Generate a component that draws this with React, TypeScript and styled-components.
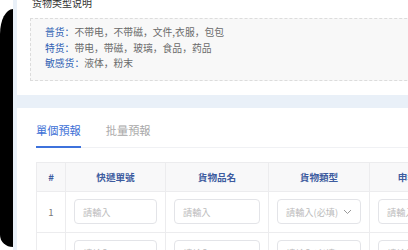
import React from 'react'
import styled, { createGlobalStyle } from 'styled-components'

const GlobalStyle = createGlobalStyle`
  html, body {
    margin: 0;
    padding: 0;
    background: #fff;
    overflow: hidden;
  }
  body {
    font-family: "Noto Sans CJK TC", "Noto Sans", sans-serif;
  }
`

const Screen = styled.div`
  display: flex;
  width: 408px;
  height: 250px;
  overflow: hidden;
`

const Bezel = styled.div`
  flex: 0 0 13px;
  margin: 9px 0 3px;
  background: #000;
  border-top-left-radius: 13px 25px;
  border-bottom-left-radius: 13px 12px;
`

const Main = styled.div`
  flex: 0 0 auto;
  width: 480px;
  display: flex;
  flex-direction: column;
  gap: 13px;
  padding-left: 4px;
  background: #e9f0f8;
`

const Card = styled.section`
  background: #fff;
`

const NoteCard = styled(Card)`
  padding: 0 0 14px 15px;
`

const NoteTitle = styled.div`
  margin-top: -4px;
  font-family: "Noto Sans CJK SC", sans-serif;
  font-size: 10px;
  line-height: 14px;
  color: #333;
`

const NoteBox = styled.div`
  margin: 8px 0 0 -2px;
  padding: 6px 14px 8px;
  background: #f8f8f8;
  border: 1px dashed #dcdcdc;
  border-right: 0;
  font-family: "Noto Sans CJK SC", sans-serif;
  font-size: 9.8px;
  line-height: 15.5px;
  color: #6a6a6a;
`

const NoteLabel = styled.span`
  color: #2f5fb3;
`

const FormCard = styled(Card)`
  flex: 1;
  padding-left: 19px;
`

const Tabs = styled.div`
  display: flex;
  gap: 25px;
  border-bottom: 1px solid #f0f1f4;
`

const Tab = styled.div<{ $active?: boolean }>`
  padding: 14px 0 8px;
  margin-bottom: -1px;
  font-size: 11.2px;
  line-height: 16px;
  color: ${(p) => (p.$active ? '#3c6fd6' : '#a8a8a8')};
  border-bottom: 2px solid ${(p) => (p.$active ? '#3d72dc' : 'transparent')};
`

const Table = styled.table`
  margin-top: 14px;
  border-collapse: collapse;
  table-layout: fixed;
  width: 451px;
`

const Th = styled.th<{ $w: number }>`
  width: ${(p) => p.$w}px;
  height: 28px;
  padding: 0;
  background: #f8f8f9;
  border: 1px solid #ececee;
  font-size: 9.6px;
  font-weight: 700;
  color: #3d5c9f;
  text-align: center;
  white-space: nowrap;
  overflow: hidden;
`

const Td = styled.td<{ $index?: boolean }>`
  height: 40px;
  padding: ${(p) => (p.$index ? '0' : '0 8px 0 8px')};
  border: 1px solid #ececee;
  font-size: 9.6px;
  color: #777;
  text-align: center;
`

const Field = styled.div`
  display: flex;
  align-items: center;
  height: 25px;
  padding: 0 8px;
  box-sizing: border-box;
  border: 1px solid #e3e4e8;
  border-radius: 4px;
  font-size: 9.2px;
  color: #bbb;
  white-space: nowrap;
  overflow: hidden;
`

const Chevron = styled.svg`
  margin-left: auto;
  flex: 0 0 auto;
`

const Input = ({ text = '請輸入' }: { text?: string }) => <Field>{text}</Field>

const Select = () => (
  <Field>
    請輸入(必填)
    <Chevron width="9" height="6" viewBox="0 0 9 6">
      <path d="M1 1l3.5 3.5L8 1" fill="none" stroke="#999" strokeWidth="1" />
    </Chevron>
  </Field>
)

const columns = [
  { title: '#', w: 28 },
  { title: '快遞單號', w: 99 },
  { title: '貨物品名', w: 102 },
  { title: '貨物類型', w: 100 },
  { title: '申報價值(HKD)', w: 122 },
]

export default function App() {
  return (
    <>
      <GlobalStyle />
      <Screen>
        <Bezel />
        <Main>
          <NoteCard>
            <NoteTitle>货物类型说明</NoteTitle>
            <NoteBox>
              <div>
                <NoteLabel>普货：</NoteLabel>不带电，不带磁，文件,衣服，包包
              </div>
              <div>
                <NoteLabel>特货：</NoteLabel>带电，带磁，玻璃，食品，药品
              </div>
              <div>
                <NoteLabel>敏感货：</NoteLabel>液体，粉末
              </div>
            </NoteBox>
          </NoteCard>
          <FormCard>
            <Tabs>
              <Tab $active>單個預報</Tab>
              <Tab>批量預報</Tab>
            </Tabs>
            <Table>
              <thead>
                <tr>
                  {columns.map((c) => (
                    <Th key={c.title} $w={c.w}>
                      {c.title}
                    </Th>
                  ))}
                </tr>
              </thead>
              <tbody>
                {[1, 2].map((n) => (
                  <tr key={n}>
                    <Td $index>{n}</Td>
                    <Td>
                      <Input />
                    </Td>
                    <Td>
                      <Input />
                    </Td>
                    <Td>
                      <Select />
                    </Td>
                    <Td>
                      <Input />
                    </Td>
                  </tr>
                ))}
              </tbody>
            </Table>
          </FormCard>
        </Main>
      </Screen>
    </>
  )
}
